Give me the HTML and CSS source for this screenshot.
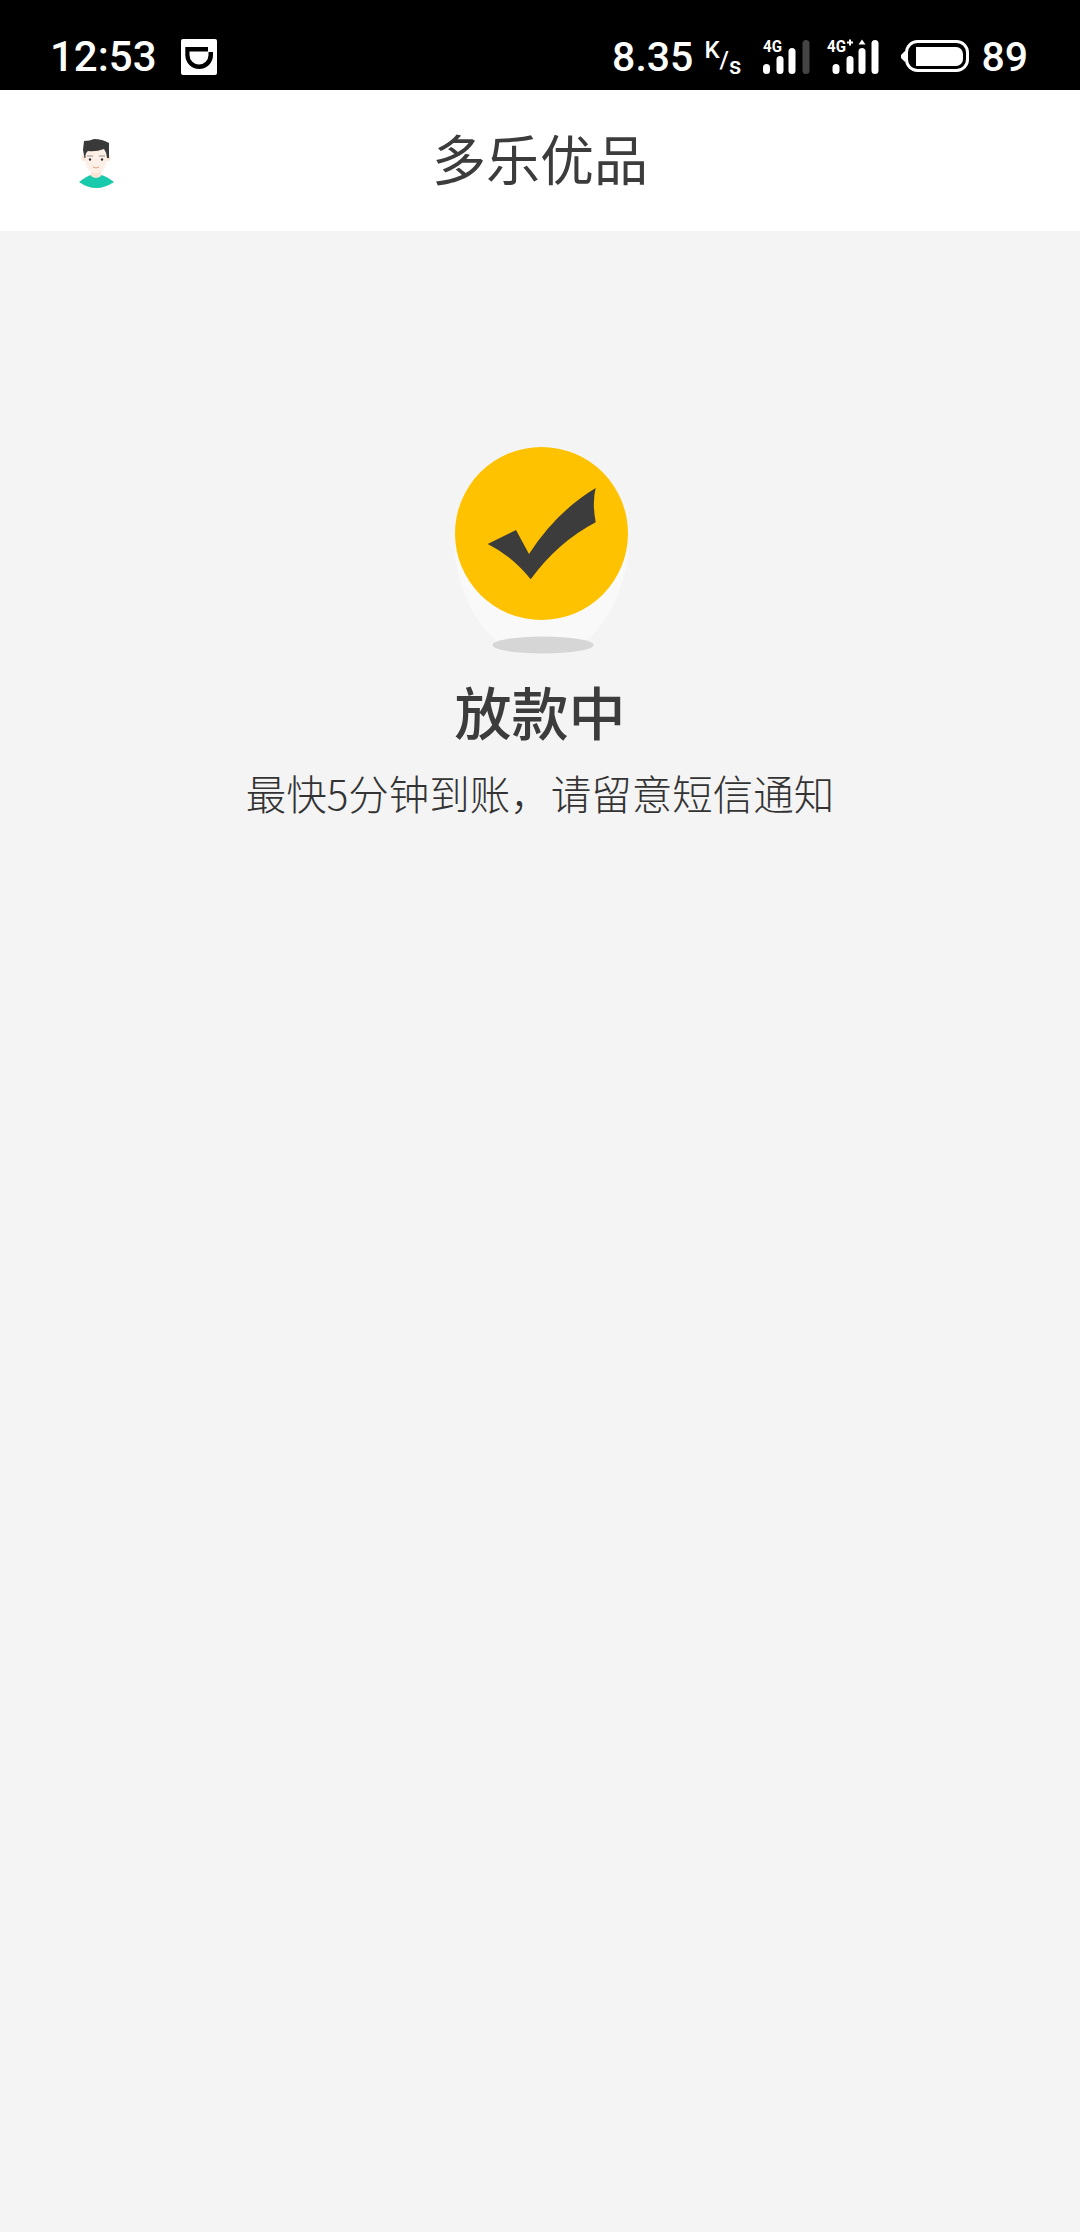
FILE: index.html
```html
<!DOCTYPE html>
<html>
  <head>
    <meta charset="UTF-8">
    <title>多乐优品</title>
    <link rel="stylesheet" href="styles.css">
  </head>
  <body>
    <div class="status-bar">
      <span class="clock">12:53</span>
      <svg class="app-icon" width="36" height="36" viewBox="0 0 36 36">
        <rect width="36" height="36" rx="2" fill="#fff"/>
        <path d="M4.300 8H27V13H32V16A13.850 14 0 0 1 4.300 16Z" fill="#000"/>
        <path d="M8.500 12.500H27.500V16A9.500 9.500 0 0 1 8.500 16Z" fill="#fff"/>
      </svg>
      <div class="status-right">
        <span class="speed">8.35</span>
        <div class="speed-unit">
          <span class="unit-k">K</span>
          <span class="unit-slash">/</span>
          <span class="unit-s">s</span>
        </div>
        <svg class="signal" width="48" height="40" viewBox="0 -4 48 40">
          <text x="0" y="13" class="net-text" textLength="19" lengthAdjust="spacingAndGlyphs">4G</text>
          <rect x="0" y="25" width="7" height="10" rx="3.500" fill="#fff"/>
          <rect x="13.500" y="17" width="7" height="18" rx="3.500" fill="#fff"/>
          <rect x="25.500" y="9" width="7" height="26" rx="3.500" fill="#fff"/>
          <rect x="39.500" y="1" width="7" height="34" rx="3.500" fill="#444"/>
        </svg>
        <svg class="signal signal-plus" width="56" height="40" viewBox="0 -4 56 40">
          <text x="0" y="13" class="net-text" textLength="19" lengthAdjust="spacingAndGlyphs">4G</text>
          <path d="M20 3.500H26M23 0.500V6.500" stroke="#fff" stroke-width="2"/>
          <rect x="5.500" y="25" width="7" height="10" rx="3.500" fill="#fff"/>
          <rect x="19.500" y="17" width="7" height="18" rx="3.500" fill="#fff"/>
          <rect x="31.500" y="9" width="7" height="26" rx="3.500" fill="#fff"/>
          <path d="M31.500 5.500L35 0.500L38.500 5.500Z" fill="#fff"/>
          <rect x="44.500" y="1" width="7" height="34" rx="3.500" fill="#fff"/>
        </svg>
        <svg class="battery" width="68" height="36" viewBox="0 0 68 36">
          <path d="M4 12L0 16V19L4 23Z" fill="#fff"/>
          <rect x="5.500" y="2.500" width="61" height="29" rx="11" fill="none" stroke="#fff" stroke-width="3"/>
          <path d="M15 8H55A7 7 0 0 1 62 15V20A7 7 0 0 1 55 27H15Z" fill="#fff"/>
        </svg>
        <span class="level">89</span>
      </div>
    </div>

    <div class="nav-bar">
      <svg class="avatar" width="52" height="64" viewBox="0 0 52 64">
        <path d="M9 51Q17 45 21 44H31Q36 45 44 51Q26 63 9 51Z" fill="#19c9ab"/>
        <path d="M21 38H31V45Q26 49 21 45Z" fill="#fde3d5"/>
        <circle cx="14.500" cy="27" r="3" fill="#fde3d5"/>
        <circle cx="37.500" cy="27" r="3" fill="#fde3d5"/>
        <path d="M15 18H37V28Q36 42 26 42Q16 42 15 28Z" fill="#fff0e7"/>
        <path d="M14.500 27L13 19L14 10Q20 10 24 8Q32 8 39 12L39 27L37 27Q37 22 34 18Q26 21 18 20Q15 22 15.500 27Z" fill="#393939"/>
        <circle cx="20" cy="28.500" r="1.200" fill="#333"/>
        <circle cx="32" cy="28.500" r="1.200" fill="#333"/>
        <path d="M17 25H23M29 25H35" stroke="#777" stroke-width="0.800"/>
        <path d="M23 36Q26 38 29 36" stroke="#e08a70" stroke-width="0.800" fill="none"/>
      </svg>
      <h1 class="nav-title">多乐优品</h1>
    </div>

    <div class="content">
      <svg class="result-icon" width="240" height="240" viewBox="0 0 240 240">
        <path d="M35 113V135Q42 192 78 222H165Q200 192 208 135V113Z" fill="#f9f9f9"/>
        <ellipse cx="123" cy="225" rx="50.500" ry="8.500" fill="#d6d6d6"/>
        <circle cx="121.500" cy="113.500" r="86.500" fill="#ffc200"/>
        <path d="M67.700 124L96 110L109 134Q136 92 175.700 68Q172 82 175.700 102.300Q138 122 110.700 159.300Q92 136 67.700 124Z" fill="#3c3c3c"/>
      </svg>
      <h2 class="result-title">放款中</h2>
      <p class="result-desc">最快5分钟到账，请留意短信通知</p>
    </div>
  </body>
</html>
```

FILE: styles.css
```css
body {
  background-color: #f4f4f4;
  color: #3c3c3c;
  font-family: "Noto Sans CJK SC", "Noto Sans", sans-serif;
  margin: 0;
  padding: 0;
}

.status-bar {
  align-items: center;
  background-color: #000;
  box-sizing: border-box;
  color: #fff;
  display: flex;
  font-family: Roboto, sans-serif;
  font-size: 41px;
  font-weight: 500;
  height: 90px;
  padding: 24px 52px 0 50px;
}

.clock {
  font-size: 42px;
  line-height: 48px;
}

.app-icon {
  margin-left: 24px;
}

.status-right {
  align-items: center;
  display: flex;
  margin-left: auto;
}

.speed,
.level {
  line-height: 48px;
}

.speed-unit {
  align-items: flex-start;
  display: flex;
  font-size: 24px;
  height: 36px;
  line-height: 22px;
  margin-left: 11px;
  width: 36px;
}

.unit-slash {
  margin-top: 10px;
}

.unit-s {
  margin-top: 16px;
}

.signal {
  margin-bottom: 4px;
  margin-left: 23px;
}

.signal-plus {
  margin-left: 16px;
}

.net-text {
  fill: #fff;
  font-family: Roboto, sans-serif;
  font-size: 16.500px;
  font-weight: 700;
}

.battery {
  margin-left: 18px;
}

.level {
  margin-left: 12px;
}

.nav-bar {
  align-items: center;
  background-color: #fff;
  display: grid;
  grid-template-columns: 52px 1fr 52px;
  height: 141px;
  padding: 0 70px;
}

.avatar {
  display: block;
  margin-top: 5px;
}

.nav-title {
  color: #3c3c3c;
  font-size: 54px;
  font-weight: 400;
  line-height: 72px;
  margin: 0 0 6px;
  text-align: center;
}

.content {
  align-items: center;
  display: flex;
  flex-direction: column;
  padding-top: 189px;
}

.result-icon {
  display: block;
}

.result-title {
  font-size: 57px;
  font-weight: 500;
  line-height: 80px;
  margin: 10px 0 0;
}

.result-desc {
  color: #333;
  font-size: 40.500px;
  font-weight: 300;
  line-height: 60px;
  margin: 13px 0 0;
}
```
